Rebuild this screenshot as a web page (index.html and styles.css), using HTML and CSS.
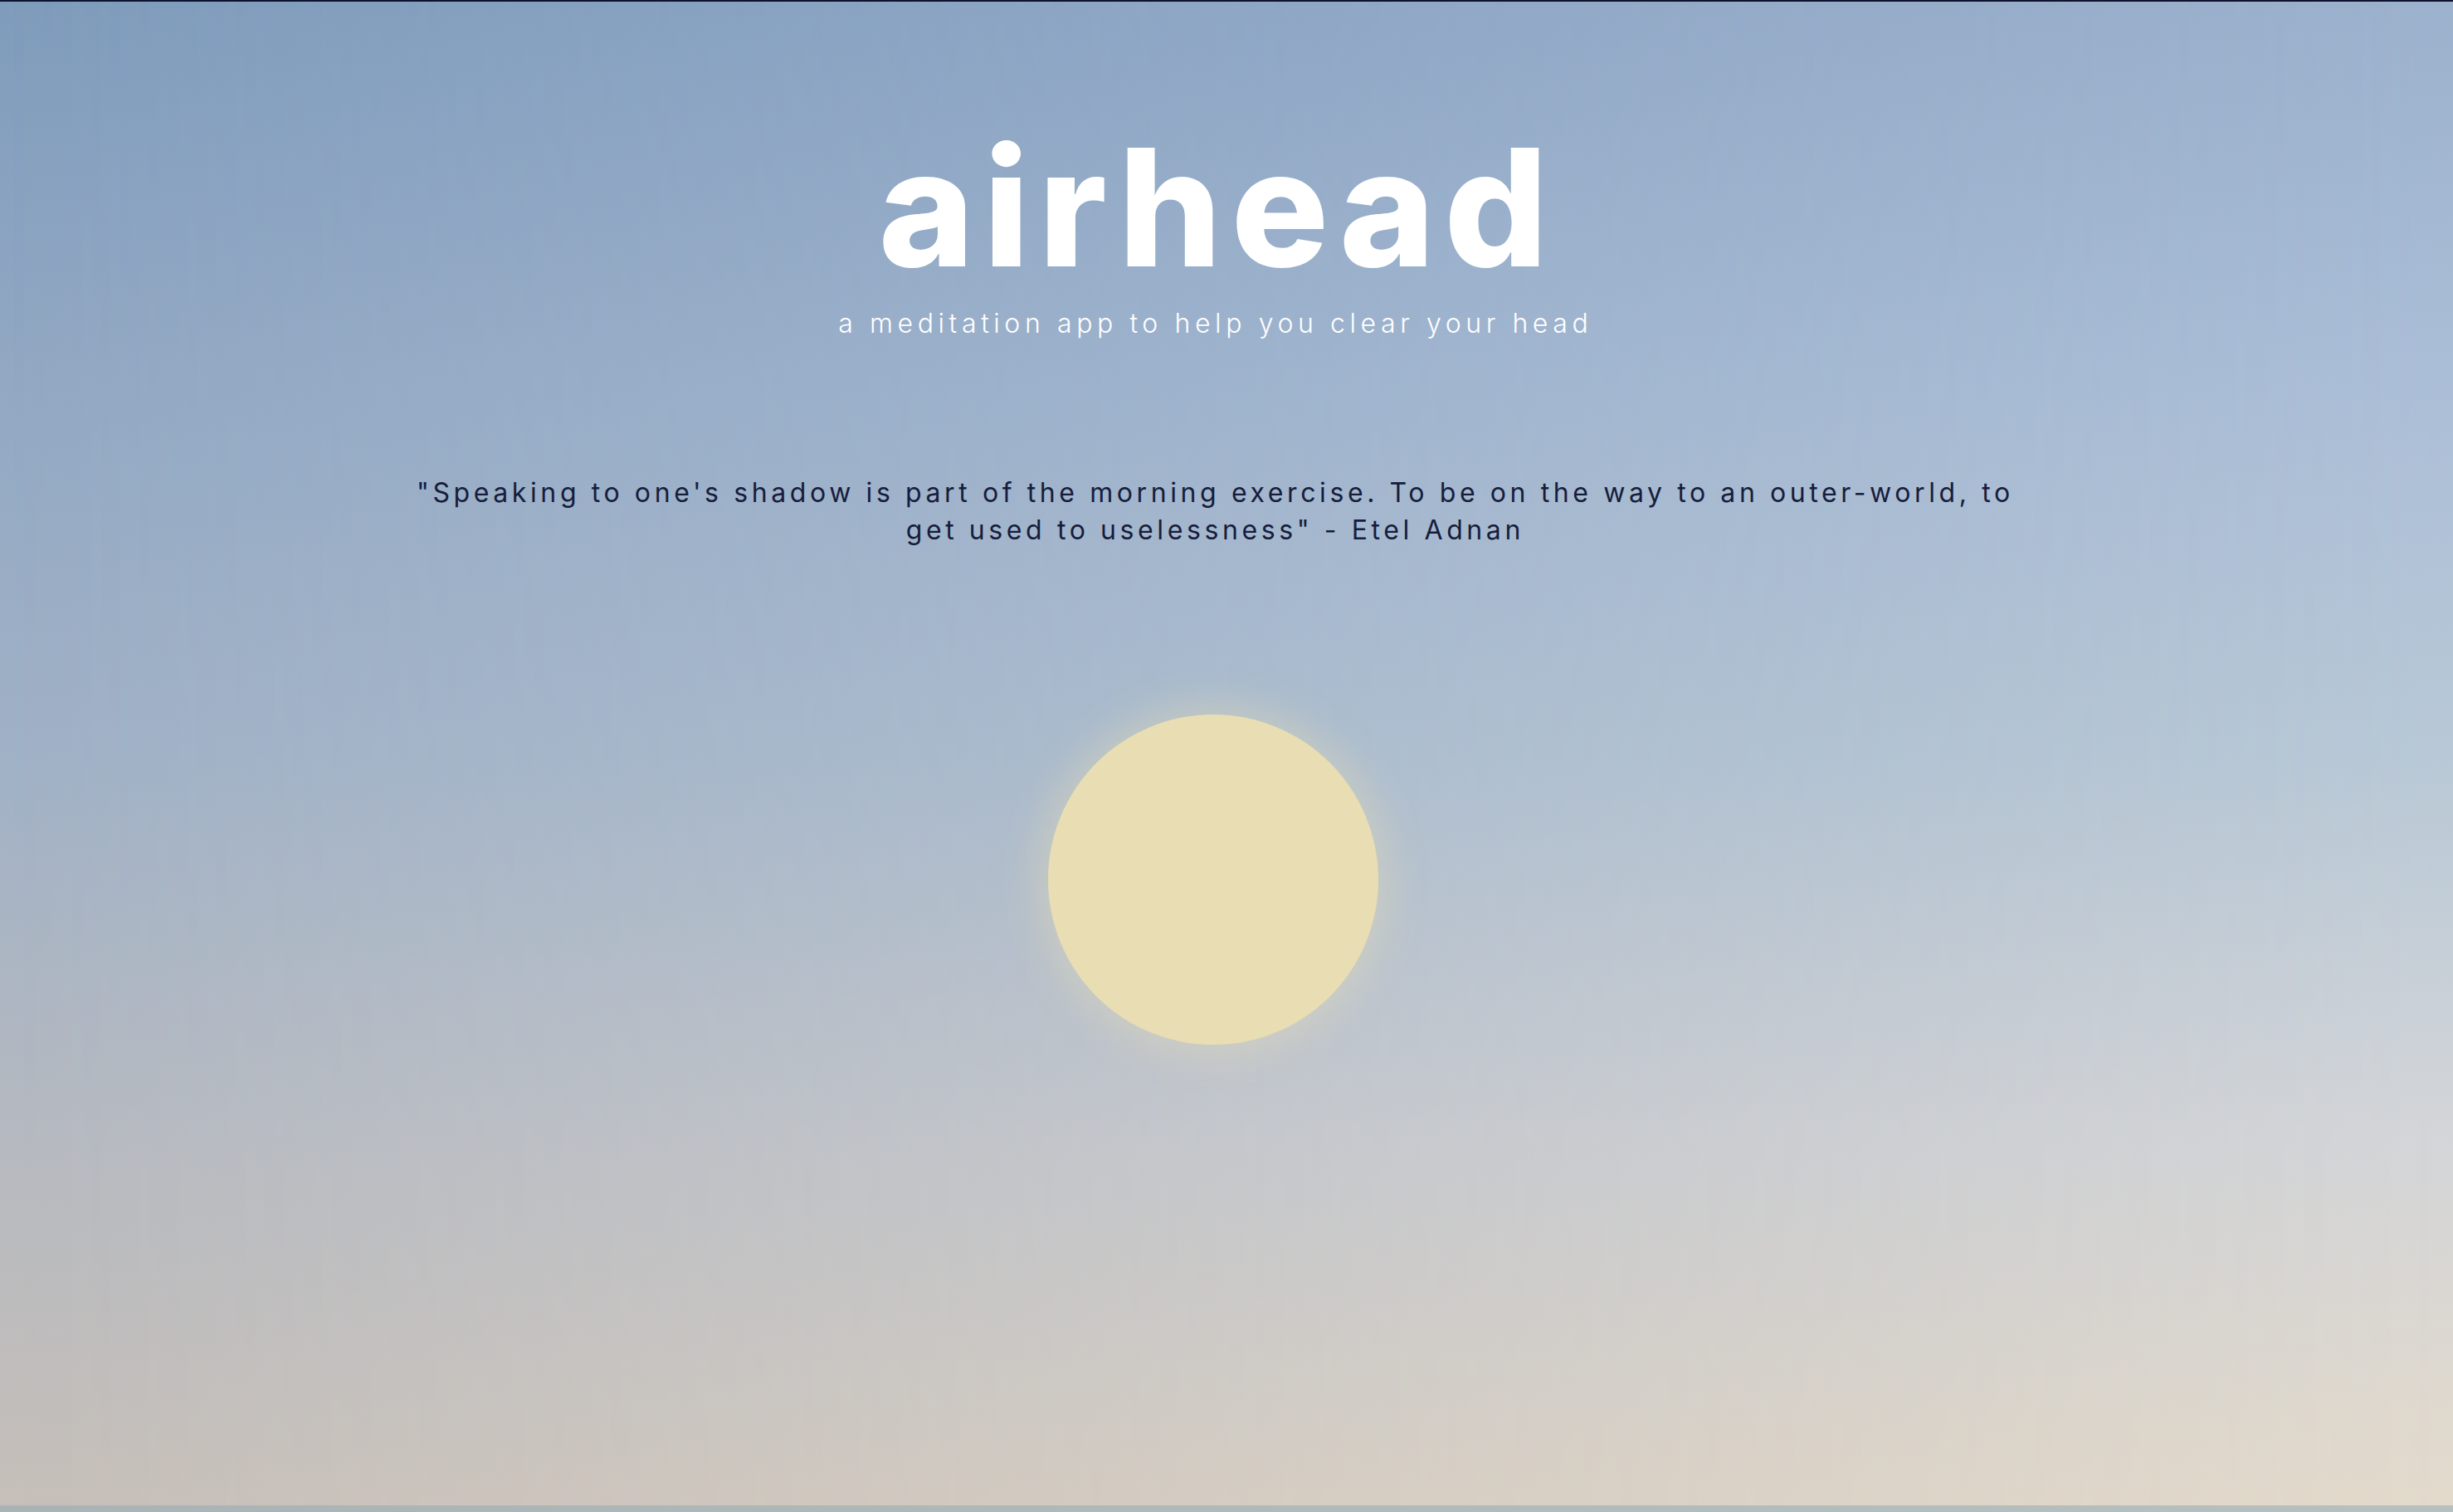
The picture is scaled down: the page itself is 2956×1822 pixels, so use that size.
FILE: index.html
```html
<!DOCTYPE html>
<html lang="en">
<head>
<meta charset="utf-8">
<title>airhead</title>
<link rel="stylesheet" href="styles.css">
</head>
<body>
<main class="page">
  <header class="brand">
    <h1 class="title">airhead</h1>
    <p class="tagline">a meditation app to help you clear your head</p>
  </header>
  <blockquote class="quote">"Speaking to one's shadow is part of the morning exercise. To be on the way to an outer-world, to get used to uselessness" - Etel Adnan</blockquote>
  <div class="sun"></div>
</main>
</body>
</html>
```
FILE: styles.css
```css
html {
  margin: 0;
  min-height: 100%;
  background: linear-gradient(to right, #a9b3b5, #b7c0bf);
}

body {
  margin: 0;
  border-top: 2px solid #0d132e;
  font-family: Inter, "Open Sans", sans-serif;
}

.page {
  position: relative;
  height: 1812px;
  box-sizing: border-box;
  padding: 150px 32px 0 0;
  display: flex;
  flex-direction: column;
  align-items: center;
  background: linear-gradient(to bottom, #7f9cbc 0%, #92a8c3 25%, #a0b1c6 50%, #b5b9c0 75%, #c6bfb9 100%);
  isolation: isolate;
}

.page::before {
  content: "";
  position: absolute;
  inset: 0;
  z-index: -1;
  background: linear-gradient(to bottom, #9cb1cd 0%, #abbed7 25%, #b8c8d6 50%, #d3d5d8 75%, #e3dacb 100%);
  -webkit-mask-image: linear-gradient(to right, transparent, #000);
  mask-image: linear-gradient(to right, transparent, #000);
}

.brand {
  display: flex;
  flex-direction: column;
  align-items: center;
}

.title {
  margin: 0;
  padding-left: 11px;
  font-size: 196px;
  line-height: 1;
  font-weight: 800;
  color: #ffffff;
  letter-spacing: 11px;
}

.tagline {
  margin: 23px 0 0;
  padding-left: 5.6px;
  font-size: 32px;
  line-height: 1.2;
  font-weight: 300;
  color: #ffffff;
  letter-spacing: 5.6px;
}

.quote {
  margin: 162px 0 0;
  max-width: 1960px;
  padding-left: 4.6px;
  font-size: 32px;
  line-height: 45px;
  font-weight: 400;
  color: #161d3c;
  text-align: center;
  letter-spacing: 4.6px;
}

.sun {
  margin-top: 200px;
  width: 398px;
  height: 398px;
  border-radius: 50%;
  background: #e8ddb3;
  box-shadow: 0 0 50px 10px rgba(232, 221, 179, 0.45);
}
```
